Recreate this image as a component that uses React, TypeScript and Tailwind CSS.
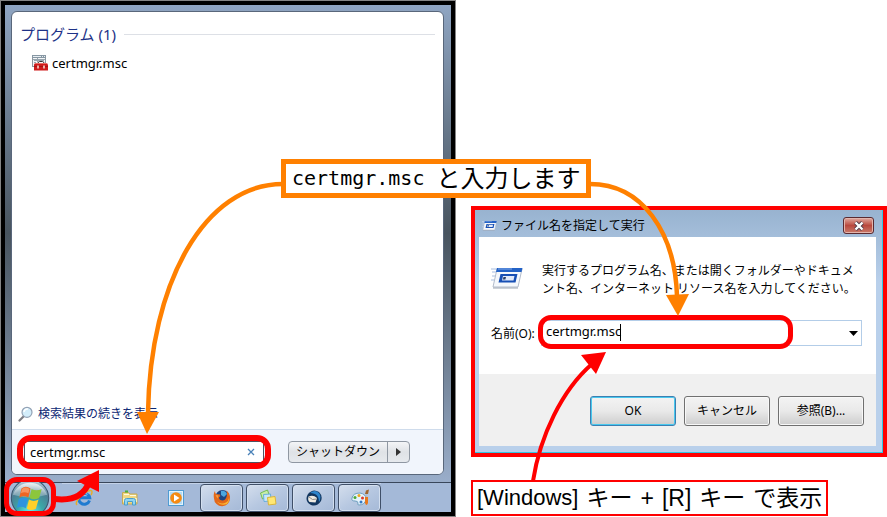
import React, { useState } from 'react';

const uiFont = 'font-["Noto_Sans","Noto_Sans_CJK_JP",sans-serif]';

const ConsoleIcon: React.FC = () => (
  <svg width="16" height="16" viewBox="0 0 16 16" aria-hidden="true">
    <rect x="0.5" y="0.5" width="13" height="11" fill="#f3f5f7" stroke="#8c979f" />
    <path d="M0 0h14v3H0z" fill="#8797a3" />
    <path d="M1 1.500h8M10 1.500h1M12 1.500h1" stroke="#e8eef2" />
    <path d="M2 5.500h3M6 5.500h6M2 7.500h2M2 9.500h1M5.500 3v4M1 4.500h12" stroke="#98a5ae" />
    <path d="M6 8.500q0-2 1.500-2h3q1.500 0 1.500 2" fill="none" stroke="#333" />
    <path d="M3 8h12l1 2v5.500H2V10z" fill="#cf1b1b" />
    <path d="M3 8.500h12" stroke="#e96a62" />
    <path d="M2 11.500h14" stroke="#a51313" />
    <path d="M5 10.500h2v3H5zM11 10.500h2v3h-2z" fill="#f0b0a8" />
  </svg>
);

const MagnifierIcon: React.FC = () => (
  <svg width="16" height="16" viewBox="0 0 16 16" aria-hidden="true">
    <path d="M5.5 10.5L1.5 14.5" stroke="#7d7d83" strokeWidth="2.2" strokeLinecap="round" />
    <circle cx="9" cy="6.3" r="5" fill="#d3edfa" stroke="#93a2b5" strokeWidth="1.2" />
    <path d="M6 6a3.2 3.2 0 0 1 4-3" fill="none" stroke="#fff" strokeWidth="1.5" />
  </svg>
);

const RunIcon: React.FC<{ className: string }> = ({ className }) => (
  <svg className={className} viewBox="0 0 32 21" aria-hidden="true">
    <path d="M0 1h6M1 4h5M1 8h3M0 12h3" stroke="#c5d3ea" strokeWidth="1.5" />
    <path d="M6 1h25l-4 18H2z" fill="#f5f8fc" stroke="#b3bccb" />
    <path d="M6 0h25.5l-1 4H5z" fill="#2362c6" />
    <path d="M7 1h14" stroke="#82aaea" />
    <path d="M9.5 6h17l-2 8.5H7.5z" fill="#174fb4" />
    <path d="M12 8h11.5l-1 4.5H11z" fill="#e1eafa" />
    <path d="M12.5 9h2.5l-.6 2.6h-2.5z" fill="#2b3f66" />
    <path d="M2 20h25" stroke="#9ba5b2" />
  </svg>
);

const StartOrb: React.FC = () => (
  <svg width="40" height="32" viewBox="0 0 36 30" className="shrink-0" aria-hidden="true">
    <defs>
      <radialGradient id="orb" cx="0.5" cy="0.9" r="0.85">
        <stop offset="0" stopColor="#6ff0f0" />
        <stop offset="0.4" stopColor="#3aa8a8" />
        <stop offset="0.75" stopColor="#4c7e94" />
        <stop offset="1" stopColor="#b4c9d8" />
      </radialGradient>
      <linearGradient id="orbShine" x1="0" y1="0" x2="0" y2="1">
        <stop offset="0" stopColor="#fff" stopOpacity="0.8" />
        <stop offset="1" stopColor="#fff" stopOpacity="0.2" />
      </linearGradient>
    </defs>
    <circle cx="18" cy="15" r="17.5" fill="url(#orb)" stroke="#3c5770" />
    <path d="M2 12A17 17 0 0 1 34 12Q18 17 2 12z" fill="url(#orbShine)" />
    <path d="M10 6q4-3 8.500 0l-2 8.500q-4.500-2.500-8.500 0z" fill="#ee6522" />
    <path d="M19.500 6.500q4.500 2.500 9.500 0l-2.500 8.500q-4.500 2.500-9 0z" fill="#8cc63c" />
    <path d="M7.500 16q4.500-2.500 8.500 0l-2 8.500q-4.500-2.500-8.500 0z" fill="#2d93e0" />
    <path d="M17 16.500q4.500 2.500 9 0l-2.500 8.500q-4.500 2.500-8.500 0z" fill="#ffd02a" />
    <path d="M10.500 6.500q3.500-2.500 7 0l-1 4q-4-2-7 0z" fill="#f9a77a" opacity="0.7" />
  </svg>
);

const ExplorerIcon: React.FC = () => (
  <svg width="18" height="18" viewBox="0 0 18 18" aria-hidden="true">
    <path d="M14.500 11.500A5.500 5.500 0 1 1 14.700 8.800H5" fill="none" stroke="#1f7bd0" strokeWidth="3" />
    <path d="M4.500 7a5 5 0 0 1 8-1.500" fill="none" stroke="#72c5f5" strokeWidth="1.200" />
    <path d="M2 16C-1 13 8 3 15 1.500c3-.5 2 3 1 4.500" fill="none" stroke="#e4ae2c" strokeWidth="1.500" />
  </svg>
);

const FolderIcon: React.FC = () => (
  <svg width="18" height="18" viewBox="0 0 18 18" aria-hidden="true">
    <path d="M1.500 3.500h6l1.500 1.500h7v10H1.500z" fill="#f0d983" stroke="#c7a953" />
    <path d="M3 5.500h5M9 6.500h6" stroke="#fffbe0" />
    <path d="M4 2.500h3" stroke="#4caf3b" strokeWidth="2" />
    <path d="M2 9h14v4H2z" fill="#fbedb5" />
    <path d="M3.500 16v-4.500q0-2 2-2h7q2 0 2 2V16h-3v-3.500h-5V16z" fill="#8fd4f2" stroke="#4a9fc9" />
  </svg>
);

const MediaIcon: React.FC = () => (
  <svg width="18" height="18" viewBox="0 0 18 18" aria-hidden="true">
    <rect x="1.500" y="1.500" width="15" height="15" fill="#b4dcf5" stroke="#4f9bd3" />
    <rect x="2.500" y="2.500" width="13" height="13" fill="none" stroke="#e1f3fd" />
    <circle cx="9" cy="9" r="5.800" fill="#f58a12" />
    <path d="M7 5.500v7L12.500 9z" fill="#fff" />
  </svg>
);

const FirefoxIcon: React.FC = () => (
  <svg width="18" height="18" viewBox="0 0 18 18" aria-hidden="true">
    <circle cx="9.500" cy="8" r="7" fill="#1d4583" />
    <path d="M8 2q4-1 6 3l-3 3-3-2z" fill="#4ba6df" />
    <path d="M2 2q0 2 1 3l4 .5q1 2-1 3 0 3 4 3 4-1 4-7 0-2-1-3 4 2 4 7.500A8 8 0 0 1 1 9.500Q0 5 2 2z" fill="#e3681a" />
    <path d="M15 4q3 6-2 9.500-5 2.500-9-1 4 5 10 2.500 4-4 1-11z" fill="#f8b533" />
    <path d="M2.500 6l3 .5-1 3z" fill="#f6a340" />
  </svg>
);

const NotesIcon: React.FC = () => (
  <svg width="18" height="18" viewBox="0 0 18 18" aria-hidden="true">
    <path d="M1.500 4l7-3 2 6-7 3z" fill="#c9eea9" stroke="#72bd55" />
    <path d="M4.500 5.500l7-.5.5 7-7 .5z" fill="#c6e8fb" stroke="#6aaedc" />
    <path d="M8.500 8.500l7.500-1 1 7.500-7.500 1z" fill="#ffe773" stroke="#d9b53c" />
  </svg>
);

const MailIcon: React.FC = () => (
  <svg width="18" height="18" viewBox="0 0 18 18" aria-hidden="true">
    <path d="M3 5Q8-1 14 3q4 4 2 9-4 6-10 4-6-3-4-9z" fill="#12365f" />
    <path d="M5 4q5-4 9 0 3 4 0 9 0-6-4-8-3-1-5-1z" fill="#2d84cb" />
    <path d="M3.500 7.500q5-2 8.500 1.500l-1.500 4.500-6-.5q-2-2-1-5.500z" fill="#eeeae1" />
    <path d="M4 8l3.500 2.500 4-.5" fill="none" stroke="#8f8c88" />
  </svg>
);

const PaintIcon: React.FC = () => (
  <svg width="20" height="18" viewBox="0 0 20 18" aria-hidden="true">
    <path d="M2 9q1-5 8-5 6 1 6 6-1 6-7 6-2 0-1-2 0-2-3-2-4 0-3-3z" fill="#e5f3fb" stroke="#6f9fbf" />
    <circle cx="5" cy="8.500" r="1.500" fill="#4ba83b" />
    <circle cx="9" cy="6.500" r="1.500" fill="#f0a51c" />
    <circle cx="12.500" cy="9" r="1.500" fill="#d93c2d" />
    <circle cx="11" cy="13" r="1.500" fill="#3678c4" />
    <path d="M16.500 5v4" stroke="#b4bfc8" strokeWidth="1.500" />
    <path d="M15 8h3v6q-1.500 4-3 0z" fill="#e8781c" />
    <path d="M15 5l1-3.500 3-1-1 4.500z" fill="#a0652e" />
  </svg>
);

const pinned = [
  { name: 'Internet Explorer', icon: <ExplorerIcon /> },
  { name: 'Explorer', icon: <FolderIcon /> },
  { name: 'Media Player', icon: <MediaIcon /> },
];

const running = [
  { name: 'Firefox', icon: <FirefoxIcon /> },
  { name: 'Sticky Notes', icon: <NotesIcon /> },
  { name: 'Thunderbird', icon: <MailIcon /> },
  { name: 'Paint', icon: <PaintIcon /> },
];

const Taskbar: React.FC = () => (
  <div className="flex h-[30px] items-stretch border-t border-[#39475b] bg-[#a4b9d8] pl-[7px]">
    <button aria-label="スタート" className="relative flex w-9 items-center justify-center">
      <StartOrb />
      <span className="absolute -inset-x-2 -top-[6px] -bottom-1 z-10 rounded-[13px] border-5 border-[#f00]" />
    </button>
    <nav className="ml-[14px] flex gap-[3px] border-t border-[#c3d2e8]">
      {pinned.map((app) => (
        <button key={app.name} aria-label={app.name} className="flex w-[43px] items-center justify-center">
          {app.icon}
        </button>
      ))}
      {running.map((app) => (
        <button
          key={app.name}
          aria-label={app.name}
          className="flex w-[43px] items-center justify-center rounded-sm border border-[#3f4f68] bg-linear-to-br from-[#d4deed] via-[#b7c8e1] to-[#a5b9d7] shadow-[inset_0_0_0_1px_#d3dfef]"
        >
          {app.icon}
        </button>
      ))}
    </nav>
  </div>
);

const StartMenu: React.FC = () => {
  const [query, setQuery] = useState('certmgr.msc');

  return (
    <section className="w-[456px] shrink-0 border border-[#858585]">
      <div className="border-4 border-black bg-linear-to-b from-[#8fa5c2] via-[#48545f] via-45% to-[#a4b9d8]">
        <div className="pt-[6px] pr-[7px] pb-[7px] pl-[6px]">
          <div className="overflow-hidden rounded-md border border-[#59677b] bg-white">
            <div className="flex h-[417px] flex-col justify-between">
              <div>
                <h2 className="flex items-center gap-2 pt-[10px] pr-2 pl-2 text-[15px] leading-6 text-[#1e3287]">
                  プログラム (1)
                  <span className="h-px flex-1 bg-[#dde0e6]" />
                </h2>
                <a href="#certmgr" className="mt-[7px] flex items-center gap-1 pl-5 text-[13px] leading-5 text-black">
                  <ConsoleIcon />
                  certmgr.msc
                </a>
              </div>
              <a href="#more" className="flex items-center gap-1 pb-[5px] pl-[6px] text-xs leading-5 text-[#0b2673]">
                <MagnifierIcon />
                検索結果の続きを表示
              </a>
            </div>
            <div className="flex items-start gap-6 border-t border-[#cfdcec] bg-[#f1f5fc] pt-[11px] pb-[11px] pl-3">
              <div className="relative flex h-[22px] w-60 items-center border border-[#4c5563] bg-white">
                <input
                  aria-label="プログラムとファイルの検索"
                  value={query}
                  onChange={(e) => setQuery(e.target.value)}
                  className="min-w-0 flex-1 bg-transparent pl-[5px] text-[13px] leading-5 text-black outline-none"
                />
                <button aria-label="クリア" onClick={() => setQuery('')} className="flex w-6 justify-center">
                  <svg width="8" height="8" viewBox="0 0 8 8">
                    <path d="M1 1l6 6M7 1L1 7" stroke="#4a82b8" strokeWidth="1.300" />
                  </svg>
                </button>
                <span className="pointer-events-none absolute -inset-x-2 -inset-y-[7px] rounded-[14px] border-6 border-[#f00]" />
              </div>
              <div className="flex h-[22px] rounded-sm border border-[#8f97a2] bg-linear-to-b from-[#f4f5f7] via-[#dfe2e6] to-[#e6e9ed] text-xs text-black">
                <button className="w-[98px]">シャットダウン</button>
                <button aria-label="その他" className="flex w-[22px] items-center justify-center border-l border-[#8f97a2]">
                  <svg width="5" height="8" viewBox="0 0 5 8">
                    <path d="M0 0l5 4-5 4z" fill="#333" />
                  </svg>
                </button>
              </div>
            </div>
          </div>
        </div>
        <Taskbar />
      </div>
    </section>
  );
};

const dialogButton =
  'h-[30px] w-[86px] rounded-[3px] border bg-linear-to-b from-[#f3f3f3] from-0% via-[#e9e9e9] via-50% to-[#cdcdcd] text-xs text-black';

const RunDialog: React.FC = () => {
  const [command, setCommand] = useState('certmgr.msc');

  return (
    <div className="border-4 border-[#f00]">
      <div className="border-r border-b border-[#35c5e2] bg-linear-to-b from-[#98b3d0] to-[#b9d0eb] to-30% pr-[6px] pb-[6px] pl-1">
        <div className="flex h-[27px] items-center pt-1 pr-[2px] pl-[3px]">
          <RunIcon className="h-[10px] w-[15px]" />
          <h2 className="ml-1 flex-1 text-xs text-black">ファイル名を指定して実行</h2>
          <button
            aria-label="閉じる"
            className="flex h-[17px] w-[31px] items-center justify-center rounded-[3px] border border-[#5a2a30] bg-linear-to-b from-[#dfaaa2] from-0% via-[#b9483e] via-50% to-[#c9796a] shadow-[inset_0_0_0_1px_#e3b5ad]"
          >
            <svg width="12" height="10" viewBox="0 0 12 10">
              <path d="M2.500 1.500l7 7M9.500 1.500l-7 7" stroke="#4f3d4b" strokeWidth="4" />
              <path d="M2.500 1.500l7 7M9.500 1.500l-7 7" stroke="#fff" strokeWidth="2.400" />
            </svg>
          </button>
        </div>
        <div className="bg-white pt-[25px] pr-[14px] pb-7 pl-3">
          <div className="flex gap-[19px]">
            <RunIcon className="mt-[6px] h-[21px] w-8 shrink-0" />
            <p className="text-xs leading-[18px] text-black">
              実行するプログラム名、または開くフォルダーやドキュメ
              <br />
              ント名、インターネット リソース名を入力してください。
            </p>
          </div>
          <div className="mt-[22px] flex items-center">
            <label htmlFor="command" className="w-[50px] pt-[2px] text-xs whitespace-nowrap text-black">
              名前(O):
            </label>
            <div className="relative flex h-[26px] flex-1 items-center border border-[#b3cde8]">
              <input
                id="command"
                value={command}
                onChange={(e) => setCommand(e.target.value)}
                className="min-w-0 flex-1 bg-transparent pb-1 pl-1 text-[13px] leading-5 text-black outline-none"
              />
              <button aria-label="履歴" className="flex w-4 justify-center">
                <svg width="9" height="5" viewBox="0 0 9 5">
                  <path d="M0 0h9L4.500 5z" fill="#000" />
                </svg>
              </button>
              <span className="absolute top-[3px] left-[78px] h-[17px] w-px bg-black" />
              <span className="pointer-events-none absolute -top-[6px] -left-1 h-[34px] w-[255px] rounded-[13px] border-5 border-[#f00]" />
            </div>
          </div>
        </div>
        <div className="flex justify-end gap-2 bg-[#f0f0f0] pt-[22px] pr-3 pb-5">
          <button className={`${dialogButton} border-[#3c7fb1] shadow-[inset_0_0_0_1px_#48c8ee]`}>OK</button>
          <button className={`${dialogButton} border-[#707070] shadow-[inset_0_0_0_1px_#f8f8f8]`}>キャンセル</button>
          <button className={`${dialogButton} border-[#707070] shadow-[inset_0_0_0_1px_#f8f8f8]`}>参照(B)...</button>
        </div>
      </div>
    </div>
  );
};

// Arrows that connect the notes with the fields
const Arrows: React.FC = () => (
  <svg className="pointer-events-none absolute top-0 left-0 z-20" width="887" height="517" viewBox="0 0 887 517" fill="none">
    <path d="M283 184C205 184 150 282 148 413" stroke="#ff8000" strokeWidth="4.500" />
    <path d="M137 412h22l-12 22z" fill="#ff8000" />
    <path d="M590 184C642 184 675 232 677 296" stroke="#ff8000" strokeWidth="4.500" />
    <path d="M666 295l23-1-11 22z" fill="#ff8000" />
    <path d="M55 499Q82 502 89 482" stroke="#f00" strokeWidth="6" />
    <path d="M99 470l-22 11 22 11z" fill="#f00" />
    <path d="M533 481C540 436 562 390 592 364" stroke="#f00" strokeWidth="4" />
    <path d="M606 352l-25 3 15 19z" fill="#f00" />
  </svg>
);

export const App: React.FC = () => {
  return (
    <main className={`relative flex items-start bg-white ${uiFont}`}>
      <StartMenu />
      <div className="flex min-w-0 flex-1 flex-col gap-[23px] pt-[206px] pl-[15px]">
        <RunDialog />
        <p className="flex w-fit gap-2 border-2 border-[#f00] bg-white px-1 font-['Liberation_Sans','Noto_Sans_CJK_JP',sans-serif] text-[23px] leading-8 whitespace-nowrap text-black">
          <span className="text-[22px]">[Windows]</span>
          <span>キー</span>
          <span>+</span>
          <span>[R]</span>
          <span>キー</span>
          <span>で表示</span>
        </p>
      </div>
      <Arrows />
      <p className="absolute top-[159px] left-[281px] z-30 flex h-[39px] items-start gap-3 border-5 border-[#ff8000] bg-white px-[6px] whitespace-nowrap text-black">
        <span className="font-['DejaVu_Sans_Mono',monospace] text-xl leading-[29px]">certmgr.msc</span>
        <span className="font-['Noto_Sans_CJK_JP',sans-serif] text-2xl leading-[25px]">と入力します</span>
      </p>
    </main>
  );
};

export default App;
